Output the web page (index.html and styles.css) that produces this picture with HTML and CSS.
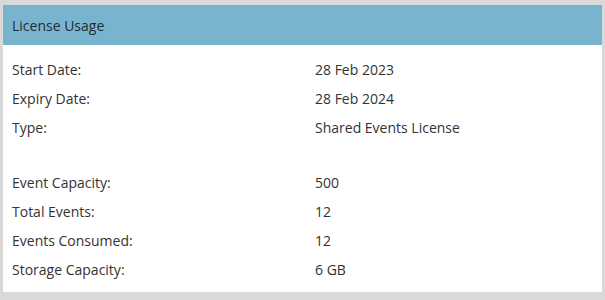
FILE: index.html
```html
<!DOCTYPE html>
<html lang="en">
<head>
    <meta charset="UTF-8">
    <title>License Usage</title>
    <link rel="stylesheet" href="styles.css">
</head>
<body>
    <div class="panel">
        <div class="panel-head">License Usage</div>
        <div class="panel-body">
            <div class="row"><span class="label">Start Date:</span><span>28 Feb 2023</span></div>
            <div class="row"><span class="label">Expiry Date:</span><span>28 Feb 2024</span></div>
            <div class="row"><span class="label">Type:</span><span>Shared Events License</span></div>
            <div class="spacer"></div>
            <div class="row"><span class="label">Event Capacity:</span><span>500</span></div>
            <div class="row"><span class="label">Total Events:</span><span>12</span></div>
            <div class="row"><span class="label">Events Consumed:</span><span>12</span></div>
            <div class="row"><span class="label">Storage Capacity:</span><span>6 GB</span></div>
        </div>
    </div>
</body>
</html>
```

FILE: styles.css
```css
body {
    margin: 0;
    background-color: #d9d9d9;
    font-family: "Open Sans", sans-serif;
    font-size: 14px;
    color: #333;
}
.panel {
    margin: 5px 3px 8px 3px;
    background-color: #fff;
    height: 287px;
}
.panel-head {
    height: 38px;
    line-height: 38px;
    padding: 2px 0 0 9px;
    background-color: #79b4ce;
    color: #1f2d36;
}
.panel-body {
    padding: 10px 9px 0 9px;
}
.row {
    display: flex;
    height: 29px;
    line-height: 29px;
}
.label {
    width: 303px;
}
.spacer {
    height: 26px;
}
```
